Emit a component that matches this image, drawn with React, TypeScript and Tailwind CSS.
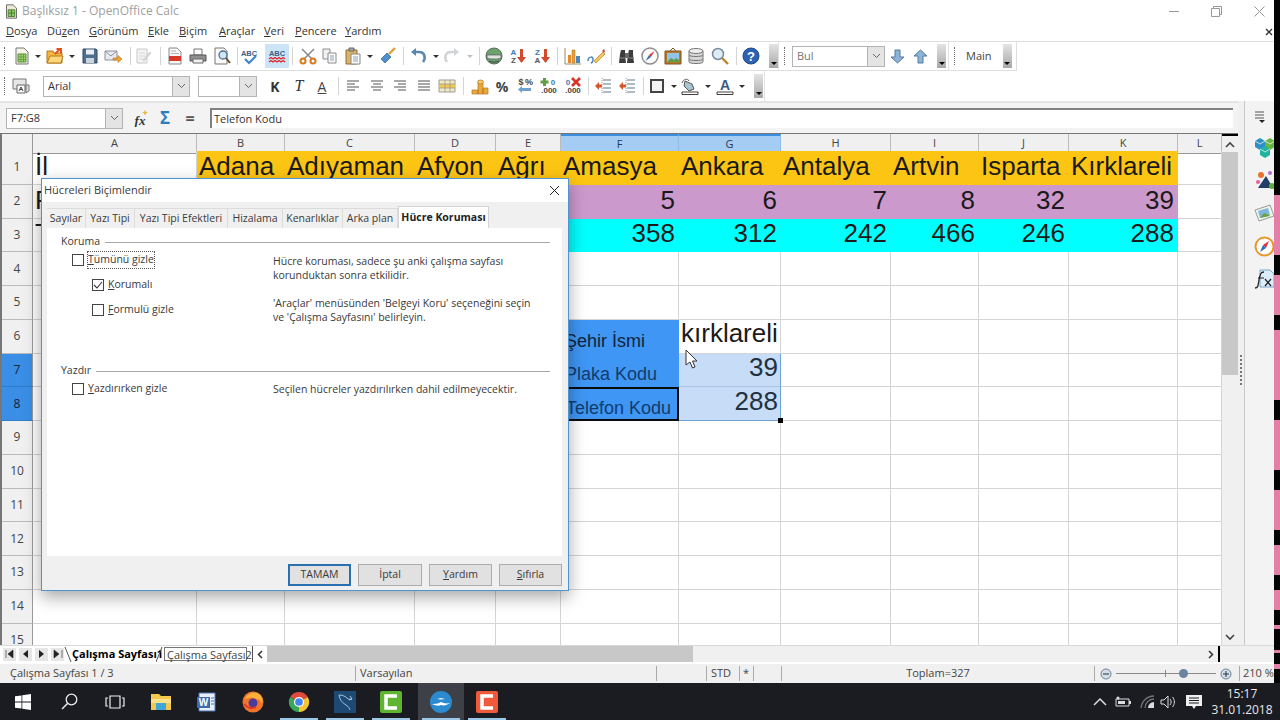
import React from "react";

type Kids = { children?: React.ReactNode; className?: string };

function Ico({ children, s = 18 }: { children: React.ReactNode; s?: number }) {
  return (
    <svg width={s} height={s} viewBox="0 0 18 18" className="block">
      {children}
    </svg>
  );
}

function Tool({ children, className = "" }: Kids) {
  return <div className={"flex h-[24px] w-[22px] shrink-0 items-center justify-center " + className}>{children}</div>;
}

function Arrow({ className = "" }: Kids) {
  return (
    <div className={"flex w-[8px] shrink-0 justify-center " + className}>
      <div className="h-0 w-0 border-x-[3px] border-t-[3px] border-x-transparent border-t-[#333]" />
    </div>
  );
}

function Sep({ className = "" }: Kids) {
  return <div className={"h-[18px] w-px shrink-0 bg-[#d4d4d4] " + className} />;
}

function Grip({ className = "" }: Kids) {
  return <div className={"h-[18px] w-px shrink-0 border-l border-dotted border-[#666] " + className} />;
}

function Overflow({ className = "" }: Kids) {
  return (
    <div className={"flex h-[24px] w-[9px] shrink-0 items-end justify-center bg-gradient-to-b from-[#e4e4e4] to-[#a8a8a8] pb-[3px] " + className}>
      <div className="h-0 w-0 border-x-[3px] border-t-[3px] border-x-transparent border-t-black" />
    </div>
  );
}

function Combo({ text, className = "", textClass = "text-[#333]" }: { text?: string; className?: string; textClass?: string }) {
  return (
    <div className={"flex h-[21px] shrink-0 items-center border border-[#b4b4b4] bg-white pl-[4px] " + className}>
      <span className={"flex-1 truncate text-[11px] " + textClass}>{text}</span>
      <div className="flex h-full w-[17px] items-center justify-center border-l border-[#b4b4b4] bg-[#e4e4e4]">
        <svg width="9" height="6" viewBox="0 0 9 6"><path d="M1 1l3.5 3.5L8 1" fill="none" stroke="#666" /></svg>
      </div>
    </div>
  );
}

const Sheet = () => (
  <Ico>
    <path d="M3 1h8l4 4v12H3z" fill="#f4f4ea" stroke="#777" />
    <path d="M5 7h8v8H5z" fill="#a9d37a" stroke="#4f8f2e" />
    <path d="M5 10h8M5 12.5h8M8 7v8M10.5 7v8" stroke="#4f8f2e" strokeWidth=".7" />
  </Ico>
);
const OpenIc = () => (
  <Ico>
    <path d="M1 4h6l1 2h8v10H1z" fill="#f3b53f" stroke="#b57a1c" />
    <path d="M1 16l3-7h13l-2 7z" fill="#fbd779" stroke="#b57a1c" />
    <path d="M9 7l5-5M10.5 2H15v4.5" fill="none" stroke="#e2541c" strokeWidth="2" />
  </Ico>
);
const SaveIc = () => (
  <Ico>
    <path d="M2 2h13l1 1v13H2z" fill="#4e6e8e" stroke="#2f4b66" />
    <path d="M5 2.5h8v5H5z" fill="#e8eef4" />
    <path d="M5 11h8v5H5z" fill="#c9d4df" />
  </Ico>
);
const MailIc = () => (
  <Ico>
    <path d="M1 4h12v9H1z" fill="#e9ebef" stroke="#8a8f98" />
    <path d="M1 4l6 5 6-5" fill="none" stroke="#8a8f98" />
    <path d="M9 11h5V8.5l4 3.5-4 3.5V13H9z" fill="#f0a43a" stroke="#b8741c" strokeWidth=".6" />
  </Ico>
);
const EditIc = () => (
  <Ico>
    <path d="M3 2h10v14H3z" fill="#f4f4f4" stroke="#c8c8c8" />
    <path d="M5 6h6M5 9h6M5 12h4" stroke="#d6d6d6" />
    <path d="M9 13l7-8 1 1-7 8z" fill="#dcdcdc" stroke="#bcbcbc" strokeWidth=".6" />
  </Ico>
);
const PdfIc = () => (
  <Ico>
    <path d="M3 1h8l4 4v12H3z" fill="#f7f7f7" stroke="#888" />
    <path d="M3 9h12v5H3z" fill="#d8392b" />
    <path d="M5 4h5M5 6.5h8" stroke="#b5b5b5" />
  </Ico>
);
const PrintIc = () => (
  <Ico>
    <path d="M5 2h8v6H5z" fill="#fafafa" stroke="#777" />
    <path d="M1 8h16v6H1z" fill="#8f8f8f" stroke="#555" />
    <path d="M4 12h10v4H4z" fill="#f2f2f2" stroke="#666" />
  </Ico>
);
const PreviewIc = () => (
  <Ico>
    <path d="M2 1h9l3 3v13H2z" fill="#fafafa" stroke="#777" />
    <circle cx="10" cy="8" r="4" fill="#cfe6f7" stroke="#4b6f8e" strokeWidth="1.3" />
    <path d="M13 11l4 5" stroke="#6a4a2b" strokeWidth="2" />
  </Ico>
);
const AbcIc = ({ wave }: { wave?: boolean }) => (
  <Ico>
    <text x="9" y="9" textAnchor="middle" fontSize="7.5" fontWeight="700" fontFamily="Liberation Sans" fill="#3b5f8a">ABC</text>
    {wave ? (
      <path d="M1 12l2-1.5 2 1.5 2-1.5 2 1.5 2-1.5 2 1.5 2-1.5 2 1.5M1 15l2-1.5 2 1.5 2-1.5 2 1.5 2-1.5 2 1.5 2-1.5 2 1.5" fill="none" stroke="#d22" strokeWidth="1.2" />
    ) : (
      <path d="M5 12l4 4 7-7" fill="none" stroke="#3f86cc" strokeWidth="2.2" />
    )}
  </Ico>
);
const CutIc = () => (
  <Ico>
    <path d="M3 2l10 10M15 2L5 12" stroke="#8d8d8d" strokeWidth="1.6" />
    <circle cx="4" cy="14" r="2.5" fill="none" stroke="#d97a1f" strokeWidth="2" />
    <circle cx="14" cy="14" r="2.5" fill="none" stroke="#d97a1f" strokeWidth="2" />
  </Ico>
);
const CopyIc = () => (
  <Ico>
    <path d="M2 2h7v10H2z" fill="#f1f1f1" stroke="#8c8c8c" />
    <path d="M7 6h8v10H7z" fill="#fafafa" stroke="#8c8c8c" />
    <path d="M9 9h4M9 11h4M9 13h4" stroke="#8aa5c0" />
  </Ico>
);
const PasteIc = () => (
  <Ico>
    <path d="M2 3h11v14H2z" fill="#d9b36b" stroke="#8f6d2e" />
    <path d="M5 1h5v3H5z" fill="#a7a7a7" stroke="#666" />
    <path d="M7 7h9v10H7z" fill="#fafafa" stroke="#888" />
    <path d="M9 10h5M9 12h5M9 14h5" stroke="#8aa5c0" />
  </Ico>
);
const BrushIc = () => (
  <Ico>
    <path d="M2 12l6-6 4 4-6 6z" fill="#4d8fd0" stroke="#2f6296" strokeWidth=".7" />
    <path d="M10 7l6-6" stroke="#d9a431" strokeWidth="2.4" />
  </Ico>
);
const UndoIc = ({ off }: { off?: boolean }) => (
  <Ico>
    <path d={off ? "M4 15c-3-4-2-10 4-10h4" : "M14 15c3-4 2-10-4-10H6"} fill="none" stroke={off ? "#d2d5d8" : "#5b88ae"} strokeWidth="2.6" />
    <path d={off ? "M11 1l5 4-5 4z" : "M7 1L2 5l5 4z"} fill={off ? "#d2d5d8" : "#5b88ae"} />
  </Ico>
);
const GlobeIc = () => (
  <Ico>
    <circle cx="9" cy="9" r="8" fill="#6ca36a" stroke="#5d6d5d" />
    <path d="M2 8h14v3c-2 1-4 1-7 1s-5 0-7-1z" fill="#dfe3de" stroke="#556" strokeWidth=".7" />
    <path d="M4 14c3 1.5 7 1.5 10 0" stroke="#345" fill="none" />
  </Ico>
);
const SortIc = ({ up, down }: { up: string; down: string }) => (
  <Ico>
    <text x="4.5" y="8" textAnchor="middle" fontSize="8" fontWeight="700" fontFamily="Liberation Sans" fill="#3d78b8">{up}</text>
    <text x="4.5" y="16" textAnchor="middle" fontSize="8" fontWeight="700" fontFamily="Liberation Sans" fill="#555">{down}</text>
    <path d="M11 2h3v8h3l-4.5 6L8 10h3z" fill="#d2492c" />
  </Ico>
);
const ChartIc = () => (
  <Ico>
    <path d="M1 1v16h16" fill="none" stroke="#9a8a5c" />
    <path d="M4 8h3v8H4z" fill="#e58a2b" />
    <path d="M8 3h3v13H8z" fill="#e9a13b" stroke="#b26b15" strokeWidth=".5" />
    <path d="M12 9h4v7h-4z" fill="#4d86c0" />
  </Ico>
);
const DrawIc = () => (
  <Ico>
    <path d="M1 14c0-5 6-5 5-1s-3 3 0 2" fill="none" stroke="#4a86c5" strokeWidth="1.5" />
    <path d="M7 14l9-9 2 2-9 9z" fill="#f3c75b" stroke="#b07f25" strokeWidth=".7" />
    <path d="M15 4l2-2 1 2-1 2z" fill="#d44" />
  </Ico>
);
const BinIc = () => (
  <Ico>
    <path d="M3 3h4v4l1 9H1l1-9zM11 3h4v4l1 9h-7l1-9z" fill="#3c3c3c" />
    <path d="M7 6h4v5H7z" fill="#6a6a6a" />
    <path d="M2 11h5M11 11h5" stroke="#888" />
  </Ico>
);
const CompassIc = () => (
  <Ico>
    <circle cx="9" cy="9" r="8" fill="#fbfbfb" stroke="#8d8d8d" strokeWidth="1.5" />
    <path d="M13.5 4L8 8l2 2z" fill="#d33" />
    <path d="M4.5 14L8 8l2 2z" fill="#2e6fb5" />
  </Ico>
);
const GalleryIc = () => (
  <Ico>
    <path d="M1 4h16v13H1z" fill="#b67a2c" stroke="#80521a" />
    <path d="M3 6h12v9H3z" fill="#8fc5e8" />
    <path d="M3 15l4-4 3 2 2-2 3 2v2z" fill="#5f9e44" />
    <path d="M6 4l3-3 3 3" fill="none" stroke="#80521a" />
  </Ico>
);
const DbIc = () => (
  <Ico>
    <path d="M2 4v11c0 2 14 2 14 0V4z" fill="#d7d7d7" stroke="#777" />
    <ellipse cx="9" cy="4" rx="7" ry="2.5" fill="#efefef" stroke="#777" />
    <path d="M2 8c0 2 14 2 14 0M2 12c0 2 14 2 14 0" fill="none" stroke="#777" />
  </Ico>
);
const ZoomIc = () => (
  <Ico>
    <circle cx="7" cy="7" r="5.5" fill="#dcecf8" stroke="#7b8a99" strokeWidth="1.5" />
    <path d="M11 11l6 6" stroke="#b8862e" strokeWidth="2.4" />
  </Ico>
);
const HelpIc = () => (
  <Ico>
    <circle cx="9" cy="9" r="8" fill="#2c62b4" stroke="#1d4687" />
    <text x="9" y="13.5" textAnchor="middle" fontSize="13" fontWeight="700" fontFamily="Liberation Sans" fill="#fff">?</text>
  </Ico>
);
const StylesIc = () => (
  <Ico>
    <path d="M1 2h13v10H1z" fill="#e6e6e6" stroke="#777" />
    <path d="M5 8h8v8H5z" fill="#fafafa" stroke="#666" />
    <path d="M7 14l2-4 2 4M8 12.5h2" fill="none" stroke="#444" />
    <path d="M14 8h3v6l-3 2z" fill="#dfdfdf" stroke="#777" />
  </Ico>
);
const AlignIc = ({ rows }: { rows: string }) => (
  <Ico>
    <path d={rows} stroke="#555" strokeWidth="1.2" />
  </Ico>
);
const TableIc = () => (
  <Ico>
    <path d="M1 3h16v12H1z" fill="#f5e9c1" stroke="#9b9b9b" />
    <path d="M1 7h16v4H1z" fill="#f2c94f" />
    <path d="M1 7h16M1 11h16M7 3v12M12 3v12" stroke="#9b9b9b" strokeWidth=".8" />
  </Ico>
);
const CoinIc = () => (
  <Ico>
    <path d="M1 13h6v4H1zM7 6h5v11H7zM12 11h5v6h-5z" fill="#eaa83c" stroke="#b5761d" strokeWidth=".7" />
    <ellipse cx="9.5" cy="5" rx="3" ry="2" fill="#f5c866" stroke="#b5761d" strokeWidth=".7" />
  </Ico>
);
const Mini = ({ children, y, fs = 9, fill = "#444", x = 9 }: { children: string; y: number; fs?: number; fill?: string; x?: number }) => (
  <text x={x} y={y} textAnchor="middle" fontSize={fs} fontWeight="700" fontFamily="Liberation Sans" fill={fill}>{children}</text>
);
const IndentIc = () => (
  <Ico>
    <path d="M9 3h8M9 7h8M9 11h8M9 15h8" stroke="#5d7890" strokeWidth="1.2" />
    <path d="M1 9l4-4v2.5h3v3H5V13z" fill="#d9542a" />
    <path d="M8 1v16" stroke="#999" strokeDasharray="1 1" />
  </Ico>
);
const BucketIc = () => (
  <Ico>
    <path d="M4 4l7 3 2 5-5 2-5-5z" fill="#a7c4d1" stroke="#555" />
    <path d="M1 6c1-4 6-5 7-2" fill="none" stroke="#555" />
    <path d="M1 15h16v2.5H1z" fill="#fff" stroke="#111" strokeWidth=".8" />
  </Ico>
);
const FontColorIc = () => (
  <Ico>
    <text x="9" y="13" textAnchor="middle" fontSize="14" fontWeight="700" fontFamily="Liberation Sans" fill="#3d5c7c">A</text>
    <path d="M1 15h16v2.5H1z" fill="#fff" stroke="#111" strokeWidth=".8" />
  </Ico>
);

function MainToolbar() {
  return (
    <div className="flex h-[29px] w-[779px] shrink-0 items-center border-r border-[#e2e2e2]">
      <Grip className="ml-[4px] mr-[6px]" />
      <Tool><Sheet /></Tool>
      <Arrow className="ml-px" />
      <Tool className="ml-[2px]"><OpenIc /></Tool>
      <Arrow className="ml-[2px]" />
      <Tool className="ml-[3px]"><SaveIc /></Tool>
      <Tool className="ml-px"><MailIc /></Tool>
      <Sep className="ml-[6px]" />
      <Tool className="ml-px"><EditIc /></Tool>
      <Sep className="ml-[6px]" />
      <Tool className="ml-[3px]"><PdfIc /></Tool>
      <Tool className="ml-px"><PrintIc /></Tool>
      <Tool className="ml-[2px]"><PreviewIc /></Tool>
      <Sep className="ml-[4px]" />
      <Tool><AbcIc /></Tool>
      <Tool className="ml-[5px] w-[24px] bg-[#cce4f7]"><AbcIc wave /></Tool>
      <Sep className="ml-[3px]" />
      <Tool className="ml-[4px]"><CutIc /></Tool>
      <Tool><CopyIc /></Tool>
      <Tool className="ml-px"><PasteIc /></Tool>
      <Arrow className="ml-[2px]" />
      <Tool className="ml-[3px]"><BrushIc /></Tool>
      <Sep className="ml-[4px]" />
      <Tool className="ml-[3px]"><UndoIc /></Tool>
      <Arrow className="ml-[3px]" />
      <Tool className="ml-px"><UndoIc off /></Tool>
      <Arrow className="ml-[3px] opacity-30" />
      <Sep className="ml-[5px]" />
      <Tool className="ml-[3px]"><GlobeIc /></Tool>
      <Tool className="ml-[2px]"><SortIc up="A" down="Z" /></Tool>
      <Tool className="ml-[2px]"><SortIc up="Z" down="A" /></Tool>
      <Sep className="ml-[4px]" />
      <Tool className="ml-[4px]"><ChartIc /></Tool>
      <Tool className="ml-px"><DrawIc /></Tool>
      <Sep className="ml-[4px]" />
      <Tool className="ml-[4px]"><BinIc /></Tool>
      <Tool className="ml-px"><CompassIc /></Tool>
      <Tool className="ml-px"><GalleryIc /></Tool>
      <Tool className="ml-px"><DbIc /></Tool>
      <Tool className="ml-[2px]"><ZoomIc /></Tool>
      <Sep className="ml-[5px]" />
      <Tool className="ml-[3px]"><HelpIc /></Tool>
      <Overflow className="ml-[7px]" />
    </div>
  );
}

function FormatToolbar() {
  return (
    <div className="flex h-[30px] w-[765px] items-center border-r border-[#e2e2e2]">
      <Grip className="ml-[4px] mr-[5px]" />
      <Tool><StylesIc /></Tool>
      <Combo text="Arial" className="ml-[11px] w-[147px]" />
      <Combo className="ml-[8px] w-[59px]" />
      <Tool className="ml-[7px] text-[14px] font-bold text-[#333]">K</Tool>
      <Tool className="ml-[2px] font-['Liberation_Serif',serif] text-[16px] italic text-[#333]">T</Tool>
      <Tool className="ml-px text-[14px] text-[#444] underline">A</Tool>
      <Sep className="ml-[5px]" />
      <Tool className="ml-[3px]"><AlignIc rows="M3 4h12M3 7h8M3 10h12M3 13h8" /></Tool>
      <Tool className="ml-[2px]"><AlignIc rows="M3 4h12M5 7h8M3 10h12M5 13h8" /></Tool>
      <Tool className="ml-px"><AlignIc rows="M3 4h12M7 7h8M3 10h12M7 13h8" /></Tool>
      <Tool className="ml-[2px]"><AlignIc rows="M3 4h12M3 7h12M3 10h12M3 13h12" /></Tool>
      <Tool className="ml-px"><TableIc /></Tool>
      <Sep className="ml-[5px]" />
      <Tool className="ml-[5px]"><CoinIc /></Tool>
      <Tool className="text-[14px] font-bold text-[#444]">%</Tool>
      <Tool className="ml-px">
        <Ico>
          <Mini y={8} fs={9} x={5}>$</Mini>
          <Mini y={8} fs={9} x={13}>%</Mini>
          <path d="M15 11H6v-2l-4 3.5L6 16v-2h9z" fill="#6da0cf" />
        </Ico>
      </Tool>
      <Tool className="ml-[2px]">
        <Ico>
          <path d="M3 1h3v2.5h2.500v3H6V9H3V6.500H.5v-3H3z" fill="#5f9e44" />
          <Mini y={8} fs={8} x={13} fill="#3d78b8">0</Mini>
          <Mini y={16} fs={8}>.000</Mini>
        </Ico>
      </Tool>
      <Tool className="ml-[2px]">
        <Ico>
          <Mini y={8} fs={8} x={4} fill="#3d78b8">0</Mini>
          <path d="M8 1l8 8M16 1l-8 8" stroke="#d8352a" strokeWidth="2.6" />
          <Mini y={16} fs={8}>.000</Mini>
        </Ico>
      </Tool>
      <Sep className="ml-[4px]" />
      <Tool className="ml-[3px]"><IndentIc /></Tool>
      <Tool className="ml-[2px]"><IndentIc /></Tool>
      <Sep className="ml-[5px]" />
      <Tool className="ml-[2px]">
        <div className="h-[14px] w-[14px] border-2 border-[#444] bg-[#f3f3f3]" />
      </Tool>
      <Arrow className="ml-[2px]" />
      <Tool className="ml-px"><BucketIc /></Tool>
      <Arrow className="ml-[3px]" />
      <Tool className="ml-[2px]"><FontColorIc /></Tool>
      <Arrow className="ml-[2px]" />
      <Overflow className="ml-[8px]" />
    </div>
  );
}

function U({ c, rest }: { c: string; rest: string }) {
  return <span><span className="underline">{c}</span>{rest}</span>;
}

const menu = [
  ["", "D", "osya", "w-[41px]"],
  ["Dü", "z", "en", "w-[42px]"],
  ["", "G", "örünüm", "w-[59px]"],
  ["", "E", "kle", "w-[31px]"],
  ["", "B", "içim", "w-[40px]"],
  ["", "A", "raçlar", "w-[45px]"],
  ["", "V", "eri", "w-[31px]"],
  ["", "P", "encere", "w-[50px]"],
  ["", "Y", "ardım", "w-[40px]"],
];

const letters = ["A", "B", "C", "D", "E", "F", "G", "H", "I", "J", "K", "L"];
const towns = ["Adana", "Adıyaman", "Afyon", "Ağrı", "Amasya", "Ankara", "Antalya", "Artvin", "Isparta", "Kırklareli"];
const plates: Record<string, string> = { F: "5", G: "6", H: "7", I: "8", J: "32", K: "39" };
const phones: Record<string, string> = { F: "358", G: "312", H: "242", I: "466", J: "246", K: "288" };

function Cell({ col, row }: { col: string; row: number }) {
  const base = "flex items-end overflow-hidden whitespace-nowrap border-b border-r font-['Liberation_Sans',Arial,sans-serif] text-[26px] leading-[30px] text-[#1a1a1a] ";
  const small = "flex items-end overflow-hidden whitespace-nowrap font-['Liberation_Sans',Arial,sans-serif] text-[18px] leading-[21px] ";
  const idx = letters.indexOf(col);
  const filled = idx >= 1 && idx <= 10;
  if (row === 1 && filled) {
    return <div className={base + "border-[#fdc513] bg-[#fdc513] pb-[3px] pl-[2px]"}>{towns[idx - 1]}</div>;
  }
  if (row === 2 && filled) {
    return <div className={base + "justify-end border-[#cc99cc] bg-[#cc99cc] pb-[3px] pr-[3px]"}>{plates[col]}</div>;
  }
  if (row === 3 && filled) {
    return <div className={base + "justify-end border-[#00ffff] bg-[#00ffff] pb-[3px] pr-[3px]"}>{phones[col]}</div>;
  }
  if (col === "A" && row <= 3) {
    const t = ["İl", "Plaka Kodu", "Telefon Kodu"][row - 1];
    return <div className={base + "border-[#d4d4d4] pb-[3px] pl-[2px]"}>{t}</div>;
  }
  if (col === "F" && row === 6) {
    return <div className={small + "border-b border-r border-[#3f96f4] bg-[#3f96f4] pb-px pl-[4px] text-[#10243c]"}>Şehir İsmi</div>;
  }
  if (col === "F" && row === 7) {
    return <div className={small + "border-b border-r border-[#3f96f4] bg-[#3f96f4] pb-px pl-[4px] text-[#123c6c]"}>Plaka Kodu</div>;
  }
  if (col === "F" && row === 8) {
    return <div className={small + "border-2 border-[#0b0b0b] bg-[#3f96f4] pl-[3px] text-[#123c6c]"}>Telefon Kodu</div>;
  }
  if (col === "G" && row === 6) {
    return <div className={base + "border-[#d4d4d4] pb-[5px] pl-[2px]"}>kırklareli</div>;
  }
  if (col === "G" && row === 7) {
    return <div className={base + "justify-end border-b-[#a9c6e8] border-r-[#6fa3d8] bg-[#c6dcf7] pb-[4px] pr-[2px] text-[#22303f]"}>39</div>;
  }
  if (col === "G" && row === 8) {
    return (
      <div className={base + "relative justify-end overflow-visible border-b-[#6fa3d8] border-r-[#6fa3d8] bg-[#c6dcf7] pb-[4px] pr-[2px] text-[#22303f]"}>
        288
        <div className="absolute -bottom-[3px] -right-[3px] h-[5px] w-[5px] bg-black" />
      </div>
    );
  }
  return <div className="border-b border-r border-[#d4d4d4]" />;
}

function SheetGrid() {
  const rows = Array.from({ length: 15 }, (_, i) => i + 1);
  return (
    <div className="h-[511px] w-[1222px] overflow-hidden border-l-2 border-[#777]">
      <div className="grid h-[17px] grid-cols-[31px_164px_88px_130px_81px_65px_118px_102px_110px_88px_90px_109px_44px]">
        <div className="border-b border-r border-[#999] bg-[#f0f0f0]" />
        {letters.map((l) => (
          <div
            key={l}
            className={
              l === "F" || l === "G"
                ? "flex items-center justify-center border-b border-r border-t-2 border-b-[#3a7fc8] border-r-[#8fbce8] border-t-[#3a8fe0] bg-[#a5cdf3] text-[11px] text-[#26384c]"
                : "flex items-center justify-center border-b border-r border-b-[#999] border-r-[#bbb] bg-[#f0f0f0] text-[11px] text-[#444]"
            }
          >
            {l}
          </div>
        ))}
      </div>
      <div className="grid auto-rows-[33.75px] grid-cols-[31px_164px_88px_130px_81px_65px_118px_102px_110px_88px_90px_109px_44px]">
        {rows.map((r) => (
          <React.Fragment key={r}>
            <div
              className={
                r === 7 || r === 8
                  ? "flex items-center justify-center border-b border-r border-b-[#2f7ccc] border-r-[#999] bg-[#3a8ee6] text-[12px] text-[#0f2338]"
                  : "flex items-center justify-center border-b border-r border-b-[#bbb] border-r-[#999] bg-[#f0f0f0] text-[12px] text-[#444]"
              }
            >
              {r}
            </div>
            {letters.map((l) => (
              <Cell key={l} col={l} row={r} />
            ))}
          </React.Fragment>
        ))}
      </div>
    </div>
  );
}

function VScroll() {
  return (
    <div className="flex h-[511px] w-[16px] flex-col items-center bg-[#f0f0f0]">
      <div className="h-[2px] w-full bg-black" />
      <div className="flex h-[16px] items-center">
        <svg width="10" height="7" viewBox="0 0 10 7"><path d="M1 6l4-4 4 4" fill="none" stroke="#444" strokeWidth="1.6" /></svg>
      </div>
      <div className="h-[223px] w-full bg-[#c8c8c8]" />
      <div className="flex-1" />
      <div className="flex h-[16px] items-center">
        <svg width="10" height="7" viewBox="0 0 10 7"><path d="M1 1l4 4 4-4" fill="none" stroke="#444" strokeWidth="1.6" /></svg>
      </div>
    </div>
  );
}

function SideBar() {
  return (
    <div className="flex h-[544px] w-[36px] shrink-0">
      <div className="flex w-[7px] flex-col items-center justify-center border-r border-[#c8c8c8] bg-[#f0f0f0]">
        <div className="mb-[6px] h-[30px] w-px border-l-2 border-dotted border-[#777]" />
      </div>
      <div className="flex flex-1 flex-col items-center overflow-hidden bg-[#f3f3f3] pt-[10px]">
        <svg width="14" height="12" viewBox="0 0 14 12">
          <path d="M2 1h9M2 4h9M2 7h9" stroke="#555" />
          <path d="M6 9h6l-3 3z" fill="#222" />
        </svg>
        <div className="ml-[10px] mt-[14px] flex flex-col gap-[12px]">
          <svg width="21" height="21" viewBox="0 0 21 21" className="block">
            <path d="M1 4l5-3 5 3v6l-5 3-5-3z" fill="#2f8fc8" />
            <path d="M11 4l5-3 5 3v6l-5 3-5-3z" fill="#68b83f" />
            <path d="M6 12l5-3 5 3v6l-5 3-5-3z" fill="#1fb4a0" />
            <path d="M1 4l5 3 5-3M11 4l5 3 5-3M6 12l5 3 5-3" fill="none" stroke="#fff" strokeWidth=".7" />
          </svg>
          <svg width="21" height="21" viewBox="0 0 21 21" className="block">
            <circle cx="7" cy="5" r="3" fill="#e8762e" />
            <circle cx="16" cy="3" r="2" fill="#b56ad0" />
            <path d="M4 18L12 6l7 12z" fill="#1e3f66" />
            <circle cx="4" cy="12" r="2" fill="#e85fa0" />
            <circle cx="18" cy="16" r="3" fill="#5fae3e" />
          </svg>
          <svg width="21" height="21" viewBox="0 0 21 21" className="block">
            <path d="M1 7l15-5 4 11-15 5z" fill="#eef3ea" stroke="#9b9b9b" />
            <path d="M4 8l10-3 2 7-10 3z" fill="#7db7e0" />
            <path d="M6 15l4-5 5 2 1 1z" fill="#6ca23c" />
          </svg>
          <svg width="21" height="21" viewBox="0 0 21 21" className="block">
            <circle cx="10.5" cy="10.5" r="9" fill="#fff" stroke="#e8962e" strokeWidth="2" />
            <path d="M15 5l-6 4 3 3z" fill="#d33" />
            <path d="M6 16l3-7 3 3z" fill="#2e6fb5" />
          </svg>
          <svg width="21" height="21" viewBox="0 0 21 21" className="block">
            <path d="M6 1h10l4 4v13H6z" fill="#dcecf8" stroke="#7aa5c8" />
            <path d="M1 19c3 0 3-2 4-8s2-8 5-8" fill="none" stroke="#222" strokeWidth="1.3" />
            <path d="M4 9h6M11 10l6 7M17 10l-6 7" stroke="#222" strokeWidth="1.2" />
          </svg>
        </div>
      </div>
    </div>
  );
}

function FormulaBar() {
  return (
    <div className="flex h-[33px] w-[1238px] items-center border-b border-t-2 border-b-[#777] border-t-[#e4e4e4] bg-[#f3f3f3]">
      <Combo text="F7:G8" className="ml-[6px] w-[117px] border-[#aaa]" />
      <Tool className="ml-[8px]">
        <Ico>
          <path d="M12 1l1 2 2 .5-2 1-1 2-1-2-2-1 2-.5z" fill="#e8b93a" />
          <text x="7" y="16" textAnchor="middle" fontSize="13" fontWeight="700" fontStyle="italic" fontFamily="Liberation Serif" fill="#333">fx</text>
        </Ico>
      </Tool>
      <Tool className="ml-px text-[17px] font-bold text-[#2a7ec0]">Σ</Tool>
      <Tool className="ml-[3px] text-[16px] font-bold text-[#555]">=</Tool>
      <div className="ml-[9px] flex h-[20px] flex-1 items-center border-l-2 border-t-2 border-[#808080] bg-white pl-[2px] text-[11px] text-[#333]">
        Telefon Kodu
      </div>
      <div className="w-[5px]" />
    </div>
  );
}

function Slant({ back }: { back?: boolean }) {
  return (
    <svg width="8" height="16" viewBox="0 0 8 16" className="block shrink-0">
      <path d={back ? "M0 16L6 1" : "M1 1l6 15"} stroke="#555" fill="none" />
    </svg>
  );
}

function SheetTabs() {
  const nav = [
    <path key="a" d="M2 2v8M9 2L4 6l5 4z" fill="#222" stroke="#222" strokeWidth=".6" />,
    <path key="b" d="M8 2L3 6l5 4z" fill="#222" />,
    <path key="c" d="M3 2l5 4-5 4z" fill="#222" />,
    <path key="d" d="M10 2v8M2 2l5 4-5 4z" fill="#222" stroke="#222" strokeWidth=".6" />,
  ];
  return (
    <div className="flex h-[17px] items-center border-t border-[#d9d9d9] bg-white text-[11px]">
      <div className="ml-[3px] flex gap-[3px]">
        {nav.map((n, i) => (
          <div key={i} className="flex h-[13px] w-[13px] items-center justify-center bg-[#e6e6e6]">
            <svg width="12" height="12" viewBox="0 0 12 12">{n}</svg>
          </div>
        ))}
      </div>
      <Slant />
      <div className="w-[84px] shrink-0 whitespace-nowrap font-bold text-black">Çalışma Sayfası1</div>
      <Slant back />
      <div className="h-[14px] w-[83px] shrink-0 whitespace-nowrap border border-[#777] pl-[2px] leading-[13px] text-[#444]">Çalışma Sayfası2</div>
      <div className="ml-[5px] h-[16px] w-px bg-[#555]" />
      <div className="flex w-[14px] justify-center">
        <svg width="6" height="9" viewBox="0 0 6 9"><path d="M5 1L1.5 4.5 5 8" fill="none" stroke="#333" strokeWidth="1.5" /></svg>
      </div>
      <div className="h-full flex-1 bg-[#f0f0f0]">
        <div className="h-full w-[426px] bg-[#c8c8c8]" />
      </div>
      <div className="flex h-full w-[14px] items-center justify-center bg-[#f0f0f0]">
        <svg width="6" height="9" viewBox="0 0 6 9"><path d="M1 1l3.5 3.5L1 8" fill="none" stroke="#333" strokeWidth="1.5" /></svg>
      </div>
      <div className="h-full w-[2px] bg-black" />
      <div className="h-full w-[54px] bg-[#f0f0f0]" />
    </div>
  );
}

function StatusBar() {
  const cell = "flex h-[15px] shrink-0 items-center border-r border-[#aaa]";
  return (
    <div className="flex h-[21px] items-center border-t-2 border-white bg-[#f0f0f0] text-[11px] text-[#444]">
      <div className={cell + " w-[356px] pl-[10px]"}>Çalışma Sayfası 1 / 3</div>
      <div className={cell + " w-[301px] pl-[4px]"}>Varsayılan</div>
      <div className={cell + " w-[50px]"} />
      <div className={cell + " w-[33px] pl-[4px]"}>STD</div>
      <div className={cell + " w-[14px] pl-[3px]"}>*</div>
      <div className={cell + " w-[28px]"} />
      <div className={cell + " w-[313px] justify-center"}>Toplam=327</div>
      <div className={cell + " w-[145px] gap-[4px] pl-[5px]"}>
        <svg width="12" height="12" viewBox="0 0 12 12"><circle cx="6" cy="6" r="5" fill="#d5dee8" stroke="#6b8299" /><path d="M3 6h6" stroke="#234" /></svg>
        <div className="relative h-px w-[100px] bg-[#888]">
          <div className="absolute -top-[3px] left-[49px] h-[7px] w-px bg-[#888]" />
          <div className="absolute -top-[4px] left-[63px] h-[9px] w-[9px] rounded-full bg-[#6b84a0]" />
        </div>
        <svg width="12" height="12" viewBox="0 0 12 12"><circle cx="6" cy="6" r="5" fill="#d5dee8" stroke="#6b8299" /><path d="M3 6h6M6 3v6" stroke="#234" /></svg>
      </div>
      <div className="whitespace-nowrap pl-[3px]">210 %</div>
    </div>
  );
}

function TrayAndClock() {
  return (
    <div className="ml-auto flex items-center text-[#e8e8e8]">
      <svg width="14" height="9" viewBox="0 0 14 9"><path d="M1 8l6-6 6 6" fill="none" stroke="#ddd" strokeWidth="1.5" /></svg>
      <svg width="16" height="12" viewBox="0 0 16 12" className="ml-[8px]">
        <path d="M1 3h13v7H1z" fill="none" stroke="#ddd" />
        <path d="M3 5h7v3H3z" fill="#ddd" />
        <path d="M14 5h2v3h-2z" fill="#ddd" />
        <circle cx="3" cy="2" r="1.5" fill="#ddd" />
      </svg>
      <svg width="16" height="14" viewBox="0 0 16 14" className="ml-[9px]">
        <path d="M1 13A13 13 0 0 1 14 1M5 13a9 9 0 0 1 9-9" fill="none" stroke="#777" strokeWidth="1.3" />
        <path d="M8 13a6 6 0 0 1 6-6v6z" fill="#ddd" />
      </svg>
      <svg width="16" height="14" viewBox="0 0 16 14" className="ml-[4px]">
        <path d="M1 5h3l4-4v12L4 9H1z" fill="none" stroke="#ddd" />
        <path d="M10 4c1.5 2 1.5 4 0 6M12.5 2c2.5 3 2.5 7 0 10" fill="none" stroke="#ddd" />
      </svg>
      <svg width="16" height="16" viewBox="0 0 16 16" className="ml-[10px]">
        <path d="M0 1h16v11h-6l-2 3-2-3H0z" fill="#eee" />
        <path d="M3 4h10M3 6.500h10M3 9h10" stroke="#1a1c22" />
      </svg>
      <div className="ml-[9px] flex w-[62px] flex-col items-center text-[12px] leading-[16px]">
        <span>15:17</span>
        <span className="whitespace-nowrap">31.01.2018</span>
      </div>
    </div>
  );
}

function Slot({ children, running, active }: { children?: React.ReactNode; running?: boolean; active?: boolean }) {
  return (
    <div className={"relative flex h-full w-[46px] shrink-0 items-center justify-center " + (active ? "bg-[#3e4047]" : "")}>
      {children}
      {running ? <div className="absolute bottom-0 left-[4px] right-[4px] h-[2px] bg-[#9cc8e8]" /> : null}
    </div>
  );
}

function Taskbar() {
  return (
    <div className="flex h-[37px] items-center bg-[#1a1c22] pr-[7px]">
      <Slot>
        <svg width="16" height="16" viewBox="0 0 16 16"><path d="M0 2.3l6.5-.9v6.2H0zM7.3 1.3L16 0v7.6H7.3zM0 8.4h6.5v6.2L0 13.700zM7.300 8.4H16V16l-8.700-1.300z" fill="#fff" /></svg>
      </Slot>
      <Slot>
        <svg width="17" height="17" viewBox="0 0 17 17"><circle cx="10.5" cy="6.5" r="5.3" fill="none" stroke="#eee" strokeWidth="1.3" /><path d="M6.500 10.500L1 16" stroke="#eee" strokeWidth="1.5" /></svg>
      </Slot>
      <Slot>
        <svg width="20" height="14" viewBox="0 0 20 14"><path d="M5 1h10v12H5zM3 3H1v8h2M17 3h2v8h-2" fill="none" stroke="#eee" strokeWidth="1.2" /></svg>
      </Slot>
      <Slot>
        <svg width="22" height="18" viewBox="0 0 22 18"><path d="M1 1h8l2 2h10v14H1z" fill="#f4c74f" /><path d="M1 6h20v4H1z" fill="#fde08a" /><path d="M6 10h10v7H6z" fill="#3fa6d8" /></svg>
      </Slot>
      <Slot>
        <svg width="22" height="22" viewBox="0 0 22 22">
          <path d="M3 2h16v18H3z" fill="#e8eef8" stroke="#4a75b5" />
          <path d="M1 6h13v11H1z" fill="#3d6bb0" />
          <text x="7.5" y="15" textAnchor="middle" fontSize="10" fontWeight="700" fontFamily="Liberation Sans" fill="#fff">W</text>
          <path d="M15 7h3M15 10h3M15 13h3" stroke="#4a75b5" />
        </svg>
      </Slot>
      <Slot>
        <svg width="22" height="22" viewBox="0 0 22 22">
          <circle cx="11" cy="11" r="10.5" fill="#f1762a" />
          <path d="M3 8c2-5 8-8 14-5 3 2 4 6 3 10-1-3-3-5-6-5-3-2-7-1-11 0z" fill="#fbb03b" />
          <circle cx="11" cy="12" r="4.5" fill="#4a3b9c" />
          <path d="M2 13c3 4 8 5 12 3" fill="none" stroke="#e2362b" strokeWidth="2" />
        </svg>
      </Slot>
      <Slot running>
        <svg width="22" height="22" viewBox="0 0 24 24">
          <path d="M12 12L2.47 6.5A11 11 0 0 1 21.53 6.5Z" fill="#e04a3a" />
          <path d="M12 12L21.53 6.5A11 11 0 0 1 12 23Z" fill="#f7c531" />
          <path d="M12 12L12 23A11 11 0 0 1 2.47 6.5Z" fill="#3aa757" />
          <circle cx="12" cy="12" r="5.5" fill="#fff" />
          <circle cx="12" cy="12" r="4.2" fill="#4285f4" />
        </svg>
      </Slot>
      <Slot running>
        <svg width="22" height="22" viewBox="0 0 22 22">
          <path d="M0 0h22v22H0z" fill="#1d4a75" />
          <path d="M5 4c1 6 4 8 7 10s3 3 4 5M5 4c3 0 6 1 8 3s3 1 5 1M16 5l2 3-3 1" fill="none" stroke="#b6cfe4" strokeWidth=".9" />
        </svg>
      </Slot>
      <Slot running>
        <svg width="22" height="22" viewBox="0 0 22 22">
          <rect width="22" height="22" rx="2" fill="#5fb52f" />
          <path d="M17 5H6v12h11" fill="none" stroke="#fff" strokeWidth="3.5" />
        </svg>
      </Slot>
      <div className="w-[4px] shrink-0" />
      <Slot running active>
        <svg width="22" height="22" viewBox="0 0 22 22">
          <circle cx="11" cy="11" r="11" fill="#2b8ad0" />
          <path d="M2 13c5 0 7-1 9-2 2 1 5 2 9 1-3 2-6 3-9 2-2 1-5 1-9-1zM7 8l4-1 4 1-4 .6z" fill="#fff" />
        </svg>
      </Slot>
      <Slot running>
        <svg width="22" height="22" viewBox="0 0 22 22">
          <rect width="22" height="22" rx="2" fill="#ee5a3a" />
          <path d="M17 5H6v12h11" fill="none" stroke="#fff" strokeWidth="3.5" />
        </svg>
      </Slot>
      <TrayAndClock />
    </div>
  );
}

function Check({ label, checked, focus, className = "" }: { label: React.ReactNode; checked?: boolean; focus?: boolean; className?: string }) {
  return (
    <div className={"flex h-[14px] items-center gap-[4px] " + className}>
      <div className="flex h-[12px] w-[12px] items-center justify-center border border-[#444] bg-white">
        {checked ? (
          <svg width="10" height="10" viewBox="0 0 10 10"><path d="M1 5l3 3 5-6" fill="none" stroke="#333" strokeWidth="1.1" /></svg>
        ) : null}
      </div>
      <span className={focus ? "outline-1 outline-dotted outline-[#555]" : ""}>{label}</span>
    </div>
  );
}

function GroupHead({ title }: { title: string }) {
  return (
    <div className="flex h-[14px] items-center gap-[5px] pl-[14px] pr-[12px]">
      <span>{title}</span>
      <div className="h-px flex-1 bg-[#a8a8a8]" />
    </div>
  );
}

const tabs = [
  ["Sayılar", "w-[39px]"],
  ["Yazı Tipi", "w-[49px]"],
  ["Yazı Tipi Efektleri", "w-[93px]"],
  ["Hizalama", "w-[55px]"],
  ["Kenarlıklar", "w-[60px]"],
  ["Arka plan", "w-[55px]"],
];

function DialogButton({ children, primary, className = "" }: Kids & { primary?: boolean }) {
  return (
    <div
      className={
        "flex h-[22px] items-center justify-center bg-[#e1e1e1] text-[10.5px] " +
        (primary ? "border-2 border-[#2a6fb0] " : "border border-[#adadad] ") +
        className
      }
    >
      {children}
    </div>
  );
}

function FormatDialog() {
  return (
    <div className="absolute left-[41px] top-[178px] flex h-[413px] w-[528px] flex-col border border-[#4f94d0] bg-[#f0f0f0] text-[10.5px] text-[#3a3a3a] shadow-[0_6px_16px_rgba(0,0,0,0.35)]">
      <div className="flex h-[23px] shrink-0 items-center justify-between bg-white pl-[2px] pr-[8px] text-[11px]">
        <span>Hücreleri Biçimlendir</span>
        <svg width="11" height="11" viewBox="0 0 11 11"><path d="M1 1l9 9M10 1l-9 9" stroke="#222" /></svg>
      </div>
      <div className="flex h-[26px] shrink-0 items-end pl-[5px]">
        {tabs.map(([t, w]) => (
          <div key={t} className={"flex h-[20px] items-center justify-center whitespace-nowrap border-r border-t border-[#dcdcdc] bg-[#f0f0f0] " + w}>
            {t}
          </div>
        ))}
        <div className="flex h-[22px] w-[91px] items-center justify-center whitespace-nowrap border-x border-t border-[#d4d4d4] bg-white font-bold text-[#222]">
          Hücre Koruması
        </div>
      </div>
      <div className="ml-[5px] h-[328px] w-[515px] shrink-0 bg-white pt-[7px]">
        <GroupHead title="Koruma" />
        <div className="flex">
          <div className="flex w-[212px] flex-col gap-[11px] pt-[4px]">
            <Check focus className="ml-[25px]" label={<U c="T" rest="ümünü gizle" />} />
            <Check checked className="ml-[45px]" label={<U c="K" rest="orumalı" />} />
            <Check className="ml-[45px]" label={<U c="F" rest="ormulü gizle" />} />
          </div>
          <div className="pl-[14px] pt-[5px] leading-[14px]">
            <p>Hücre koruması, sadece şu anki çalışma sayfası</p>
            <p>korunduktan sonra etkilidir.</p>
            <p className="mt-[14px]">'Araçlar' menüsünden 'Belgeyi Koru' seçeneğini seçin</p>
            <p>ve 'Çalışma Sayfasını' belirleyin.</p>
          </div>
        </div>
        <div className="mt-[40px]">
          <GroupHead title="Yazdır" />
        </div>
        <div className="flex pt-[4px]">
          <div className="w-[212px]">
            <Check className="ml-[25px]" label={<U c="Y" rest="azdırırken gizle" />} />
          </div>
          <p className="pl-[14px] leading-[14px]">Seçilen hücreler yazdırılırken dahil edilmeyecektir.</p>
        </div>
      </div>
      <div className="flex flex-1 justify-end gap-[7px] pr-[6px] pt-[8px]">
        <DialogButton primary className="w-[63px]">TAMAM</DialogButton>
        <DialogButton className="w-[64px]">İptal</DialogButton>
        <DialogButton className="w-[63px]"><U c="Y" rest="ardım" /></DialogButton>
        <DialogButton className="w-[63px]"><U c="S" rest="ıfırla" /></DialogButton>
      </div>
    </div>
  );
}

function Wallpaper() {
  return (
    <svg width="6" height="683" viewBox="0 0 6 683" className="block shrink-0">
      <path d="M0 0h6v683H0z" fill="#050505" />
      <path d="M0 195h6v60H0zM0 275h6v40H0zM0 330h6v70H0zM0 420h6v50H0zM0 490h6v40H0zM0 545h6v30H0zM0 590h6v20H0zM0 625h6v4H0zM0 650h6v3H0zM0 664h6v5H0z" fill="#e47fa8" />
    </svg>
  );
}

export default function App() {
  return (
    <div className="flex h-[720px] w-[1280px] flex-col overflow-hidden font-['Open_Sans',sans-serif]">
      <div className="flex h-[683px]">
        <div className="relative flex w-[1274px] flex-col bg-white">
          <div className="flex h-[22px] items-center pl-[4px] text-[12px] text-[#a0a0a0]">
            <Ico s={15}>
              <path d="M3 1h8l4 4v12H3z" fill="#ece9d8" stroke="#555" />
              <path d="M5 7h8v8H5z" fill="#8fc36a" stroke="#3f7a22" />
              <path d="M5 11h8M9 7v8" stroke="#3f7a22" />
            </Ico>
            <span className="ml-[3px]">Başlıksız 1 - OpenOffice Calc</span>
            <div className="ml-auto flex items-center">
              <div className="h-px w-[10px] bg-[#999]" />
              <svg width="11" height="11" viewBox="0 0 11 11" className="ml-[32px]"><path d="M.5 2.5h8v8h-8zM2.5 2.5v-2h8v8h-2" fill="none" stroke="#999" /></svg>
              <svg width="11" height="11" viewBox="0 0 11 11" className="ml-[32px] mr-[9px]"><path d="M.5.5l10 10M10.5.5l-10 10" stroke="#999" /></svg>
            </div>
          </div>
          <div className="flex h-[20px] items-center border-b border-[#dedede] pl-[6px] text-[11px] text-[#333]">
            {menu.map(([a, b, c, w]) => (
              <div key={b + c} className={"shrink-0 whitespace-nowrap " + w}>
                {a}<span className="underline">{b}</span>{c}
              </div>
            ))}
            <svg width="8" height="8" viewBox="0 0 8 8" className="ml-auto mr-[1px]"><path d="M1 1l6 6M7 1L1 7" stroke="#333" strokeWidth="1.4" /></svg>
          </div>
          <div className="flex h-[29px] w-[1017px] items-center border-b border-r border-[#dedede]">
            <MainToolbar />
            <div className="flex h-[29px] w-[170px] shrink-0 items-center border-r border-[#e2e2e2]">
              <Grip className="ml-[5px]" />
              <Combo text="Bul" className="ml-[7px] w-[93px]" textClass="text-[#777]" />
              <Tool className="ml-[1px]">
                <svg width="15" height="15" viewBox="0 0 15 15"><path d="M5 1h5v7h4l-6.5 6L1 8h4z" fill="#8db4d6" stroke="#4f7a9f" /></svg>
              </Tool>
              <Tool className="ml-[1px]">
                <svg width="15" height="15" viewBox="0 0 15 15"><path d="M5 14h5V7h4L7.5 1 1 7h4z" fill="#8db4d6" stroke="#4f7a9f" /></svg>
              </Tool>
              <Overflow className="ml-[6px]" />
            </div>
            <Grip className="ml-[5px]" />
            <span className="ml-[11px] text-[11px] text-[#444]">Main</span>
            <Overflow className="ml-[11px]" />
          </div>
          <FormatToolbar />
          <div className="flex">
            <div className="flex w-[1238px] flex-col">
              <FormulaBar />
              <div className="flex">
                <SheetGrid />
                <VScroll />
              </div>
            </div>
            <SideBar />
          </div>
          <SheetTabs />
          <StatusBar />
          <FormatDialog />
          <svg width="13" height="20" viewBox="0 0 13 20" className="absolute left-[685px] top-[349px]">
            <path d="M1 1v15l4-3 2.5 6 2.5-1-2.5-6H12z" fill="#fff" stroke="#333" />
          </svg>
        </div>
        <Wallpaper />
      </div>
      <Taskbar />
    </div>
  );
}
